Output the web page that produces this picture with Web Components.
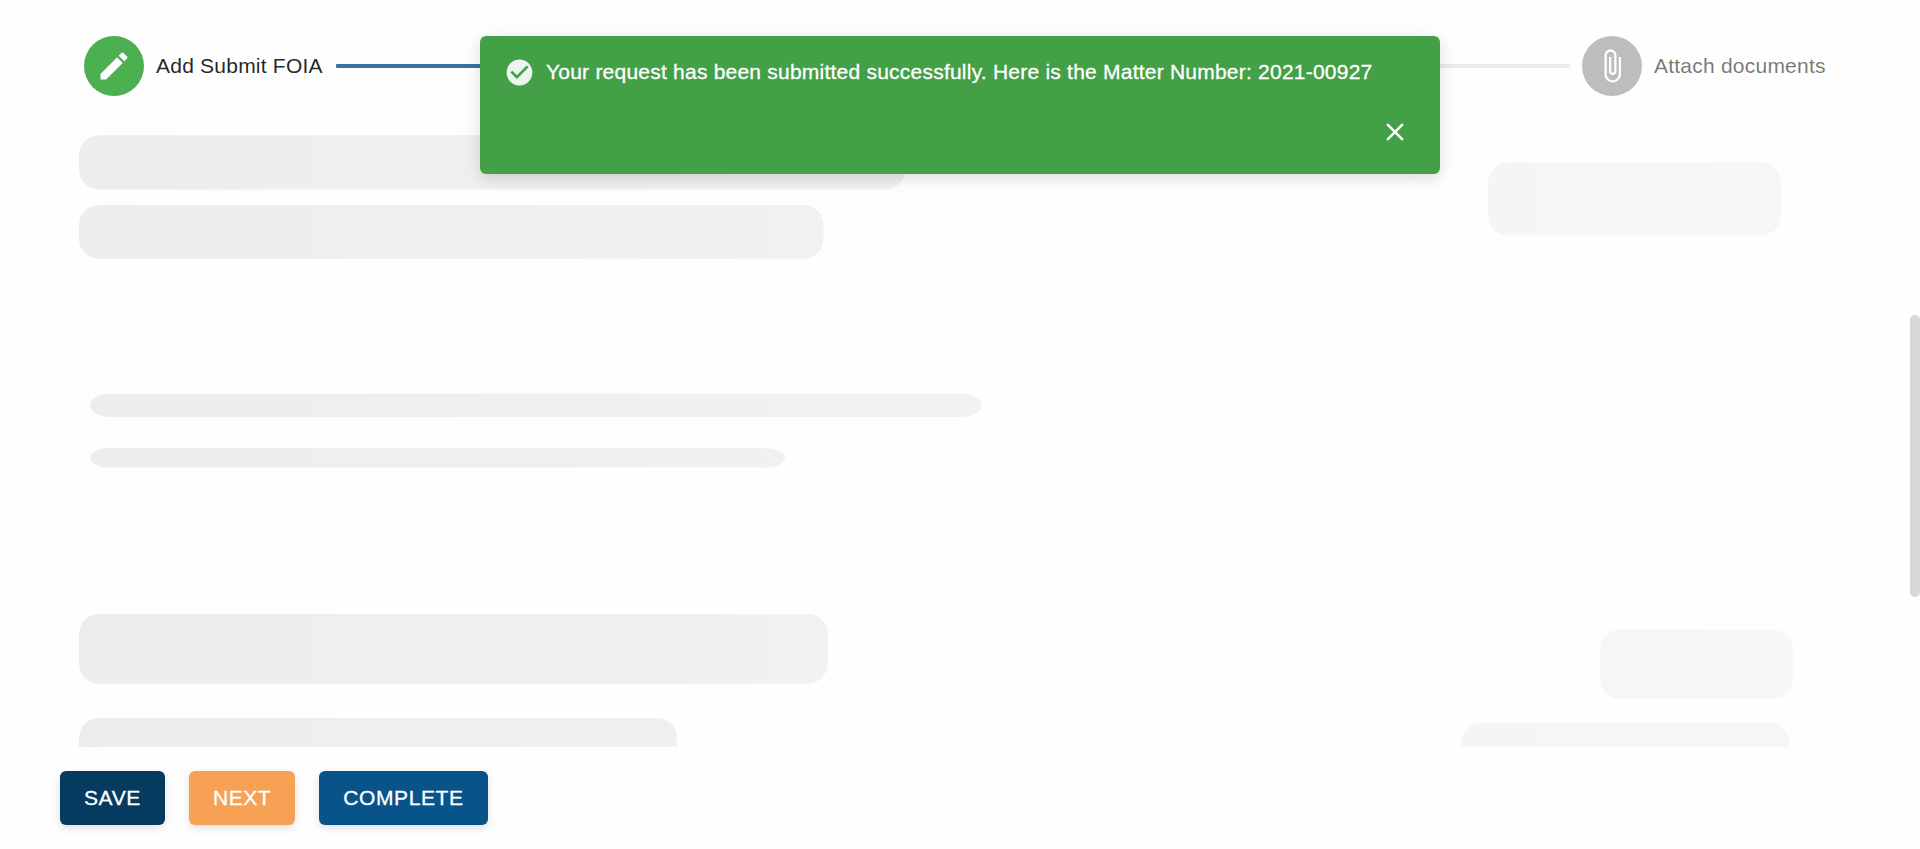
<!DOCTYPE html>
<html lang="en">
<head>
<meta charset="utf-8">
<title>Submit FOIA</title>
<style>
html,body{margin:0;height:100%;overflow:hidden;background:#fefefe;font-family:"Liberation Sans",Arial,sans-serif}
</style>
</head>
<body>
<foia-page></foia-page>
<script>
class BaseElement extends HTMLElement {
  connectedCallback() {
    if (!this.shadowRoot) this.attachShadow({ mode: 'open' }).innerHTML = this.view();
  }
}

class StepItem extends BaseElement {
  view() {
    return `<style>
      :host{display:flex;align-items:center;gap:12px;color:rgba(0,0,0,.87);font-size:21px;letter-spacing:.225px;line-height:30px;white-space:nowrap}
      :host([pending]){color:rgba(0,0,0,.54)}
      .disc{display:flex;align-items:center;justify-content:center;width:60px;height:60px;border-radius:50%;background:#4caf50}
      :host([pending]) .disc{background:#bdbdbd}
    </style><span class="disc"><slot name="icon"></slot></span><span><slot></slot></span>`;
  }
}
customElements.define('step-item', StepItem);

class StepLine extends BaseElement {
  view() {
    return `<style>
      :host{display:block;flex:1;height:4px;background:#3873a3;border-radius:1px}
      :host([pending]){background:#eaeaf0;border-radius:1px}
    </style>`;
  }
}
customElements.define('step-line', StepLine);

class ProgressSteps extends BaseElement {
  view() {
    return `<style>
      :host{display:flex;align-items:center;padding:36px 94px 0 84px;height:60px}
      step-line{margin-left:13px}
      step-line[pending]{margin:0 12px 0 0}
      step-item[pending]{width:244px}
      svg{display:block;fill:#fff}
    </style>
    <step-item><svg slot="icon" width="36" height="36" viewBox="0 0 24 24"><path d="M3 17.25V21h3.75L17.81 9.94l-3.75-3.75L3 17.25zM20.71 7.04c.39-.39.39-1.02 0-1.41l-2.34-2.34a.9959.9959 0 0 0-1.41 0l-1.83 1.83 3.75 3.75 1.83-1.83z"/></svg>Add Submit FOIA</step-item>
    <step-line></step-line><step-line pending></step-line>
    <step-item pending><svg slot="icon" width="36" height="36" viewBox="0 0 24 24"><path d="M16.5 6v11.5c0 2.21-1.79 4-4 4s-4-1.79-4-4V5c0-1.38 1.12-2.5 2.5-2.5s2.5 1.12 2.5 2.5v10.5c0 .55-.45 1-1 1s-1-.45-1-1V6H10v9.500c0 1.38 1.120 2.500 2.500 2.500s2.500-1.120 2.500-2.500V5c0-2.210-1.790-4-4-4S7 2.790 7 5v12.500c0 3.040 2.460 5.500 5.500 5.500s5.500-2.460 5.500-5.500V6h-1.500z"/></svg>Attach documents</step-item>`;
  }
}
customElements.define('progress-steps', ProgressSteps);

class ContentSkeleton extends BaseElement {
  view() {
    return `<style>:host{display:block;overflow:hidden}svg{display:block}</style>
    <svg width="1920" height="651" viewBox="0 96 1920 651">
      <defs><linearGradient id="tone" gradientUnits="userSpaceOnUse" x1="79" x2="1793" y1="0" y2="0">
        <stop offset="0" stop-color="#ecedee"/><stop offset=".45" stop-color="#f0f1f3"/><stop offset=".82" stop-color="#f5f5f6"/><stop offset="1" stop-color="#f7f7f7"/>
      </linearGradient></defs>
      <g fill="url(#tone)">
        <rect x="79" y="135.300" width="826" height="54.200" rx="20"/>
        <rect x="79" y="205" width="744.500" height="53.800" rx="20"/>
        <rect x="1488" y="162.300" width="293" height="73.300" rx="20"/>
        <rect x="90" y="393.700" width="892" height="23.300" rx="20"/>
        <rect x="90" y="448" width="695" height="19.500" rx="20"/>
        <rect x="79" y="614" width="748.700" height="69.700" rx="20"/>
        <rect x="1600" y="629.700" width="193" height="69.300" rx="20"/>
        <rect x="79" y="718" width="598" height="60" rx="20"/>
        <rect x="1461" y="722.500" width="328" height="60" rx="20"/>
      </g>
    </svg>`;
  }
}
customElements.define('content-skeleton', ContentSkeleton);

class ActionButton extends BaseElement {
  view() {
    return `<style>
      :host{display:block}
      button{display:block;height:54px;padding:0 24px;border:0;border-radius:6px;background:var(--tone);color:#fff;font:21px/54px "Liberation Sans",Arial,sans-serif;letter-spacing:.6px;-webkit-text-stroke:.3px #fff;box-shadow:0 3px 8px rgba(0,0,0,.12)}
    </style><button><slot></slot></button>`;
  }
}
customElements.define('action-button', ActionButton);

class ActionBar extends BaseElement {
  view() {
    return `<style>
      :host{display:flex;gap:24px;padding:24px 60px}
      .save{--tone:#063a60}.next{--tone:#f7a154}.complete{--tone:#08538a}
    </style>
    <action-button class="save">SAVE</action-button><action-button class="next">NEXT</action-button><action-button class="complete">COMPLETE</action-button>`;
  }
}
customElements.define('action-bar', ActionBar);

class ToastMessage extends BaseElement {
  view() {
    return `<style>
      :host{position:absolute;top:36px;left:480px;width:960px;height:138px;box-sizing:border-box;padding:20px 30px 0 23.500px;border-radius:6px;background:#43a047;color:#fff;box-shadow:0 3px 24px rgba(0,0,0,.07),0 5px 12px rgba(0,0,0,.08)}
      .row{display:flex;align-items:center;gap:11.500px;height:32px;font-size:21px;letter-spacing:.225px;-webkit-text-stroke:.3px #fff;white-space:nowrap}
      .close{display:flex;justify-content:flex-end;margin-top:29px}
      svg{display:block;fill:#fff}.check{opacity:.9}
    </style>
    <div class="row"><svg class="check" width="31" height="31" viewBox="0 0 24 24"><path d="M12 2C6.480 2 2 6.480 2 12s4.480 10 10 10 10-4.480 10-10S17.520 2 12 2zm-2 15l-5-5 1.410-1.410L10 14.170l7.590-7.590L19 8l-9 9z"/></svg><span><slot></slot></span></div>
    <div class="close"><svg width="30" height="30" viewBox="0 0 24 24"><path d="M19 6.410L17.590 5 12 10.590 6.410 5 5 6.410 10.590 12 5 17.590 6.410 19 12 13.410 17.590 19 19 17.590 13.410 12z"/></svg></div>`;
  }
}
customElements.define('toast-message', ToastMessage);

class ScrollThumb extends BaseElement {
  view() {
    return `<style>:host{position:absolute;top:315px;right:0;width:10px;height:282px;border-radius:5px;background:#d8d8d8}</style>`;
  }
}
customElements.define('scroll-thumb', ScrollThumb);

class FoiaPage extends BaseElement {
  view() {
    return `<style>:host{display:flex;flex-direction:column;position:relative;height:849px;overflow:hidden}</style>
    <progress-steps></progress-steps>
    <content-skeleton></content-skeleton>
    <action-bar></action-bar>
    <scroll-thumb></scroll-thumb>
    <toast-message>Your request has been submitted successfully. Here is the Matter Number: 2021-00927</toast-message>`;
  }
}
customElements.define('foia-page', FoiaPage);
</script>
</body>
</html>
